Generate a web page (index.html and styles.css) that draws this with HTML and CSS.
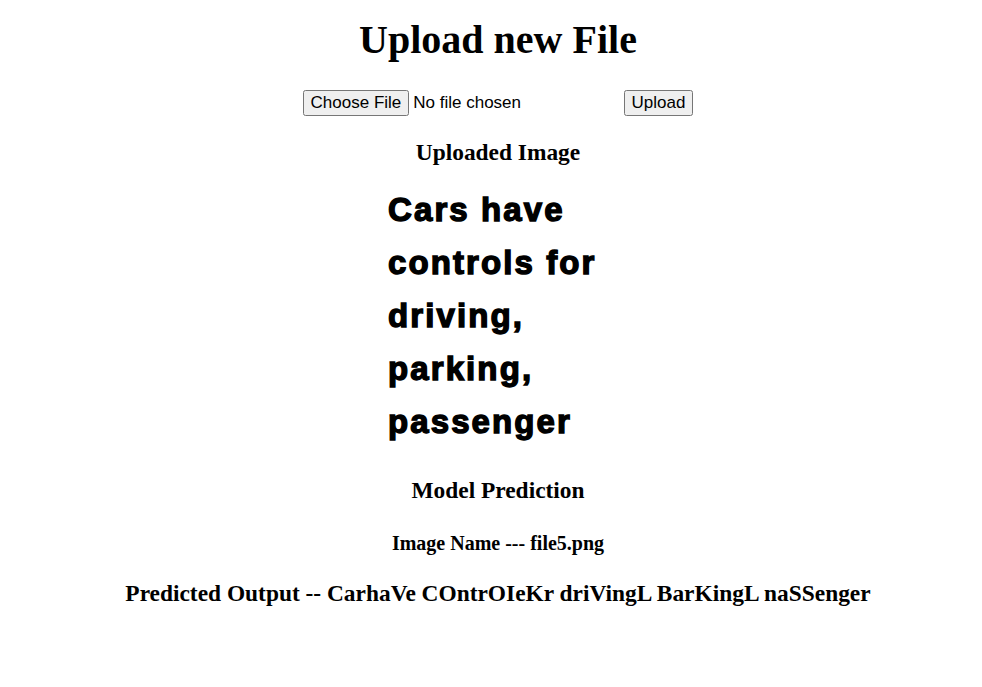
FILE: index.html
```html
<!DOCTYPE html>
<html>
<head>
<meta charset="utf-8">
<title>Upload new File</title>
<link rel="stylesheet" href="styles.css">
</head>
<body>
<div class="page">
  <h1 class="title">Upload new File</h1>
  <form class="upload-form">
    <input type="file" name="file" class="file-input">
    <input type="submit" value="Upload" class="upload-btn">
  </form>
  <h3 class="section">Uploaded Image</h3>
  <div class="image-box">
    <div class="image-text">Cars have<br>controls for<br>driving,<br>parking,<br>passenger</div>
  </div>
  <h3 class="section model">Model Prediction</h3>
  <h4 class="image-name">Image Name --- file5.png</h4>
  <h3 class="prediction">Predicted Output -- CarhaVe COntrOIeKr driVingL BarKingL naSSenger</h3>
</div>
</body>
</html>
```
FILE: styles.css
```css
html, body {
  margin: 0;
  padding: 0;
  background: #fff;
}
body {
  font-family: "Liberation Serif", "Times New Roman", serif;
  color: #000;
}
.page {
  padding: 8px 8px 8px 22px;
  text-align: center;
}
.title {
  font-size: 40px;
  line-height: 46px;
  font-weight: bold;
  margin: 9px 0 0;
}
.upload-form {
  display: flex;
  justify-content: center;
  align-items: center;
  margin-top: 27px;
  font-family: "Liberation Sans", Arial, sans-serif;
  font-size: 17px;
}
.file-input {
  width: 321px;
  font-family: "Liberation Sans", Arial, sans-serif;
  font-size: 17px;
}
.upload-btn {
  font-family: "Liberation Sans", Arial, sans-serif;
  font-size: 17px;
}
.section {
  font-size: 23.4px;
  line-height: 27px;
  margin: 23px 0 0;
}
.image-box {
  width: 250px;
  margin: 17px auto 0;
  text-align: left;
  padding-left: 15px;
  box-sizing: border-box;
}
.image-text {
  font-family: "Liberation Sans", Arial, sans-serif;
  font-weight: bold;
  font-size: 33px;
  line-height: 53px;
  letter-spacing: 2.1px;
  -webkit-text-stroke: 1.4px #000;
}
.model {
  margin-top: 29px;
}
.image-name {
  font-size: 20px;
  line-height: 23px;
  margin: 28px 0 0;
}
.prediction {
  font-size: 23.4px;
  line-height: 27px;
  margin: 25px 0 0;
}
```
